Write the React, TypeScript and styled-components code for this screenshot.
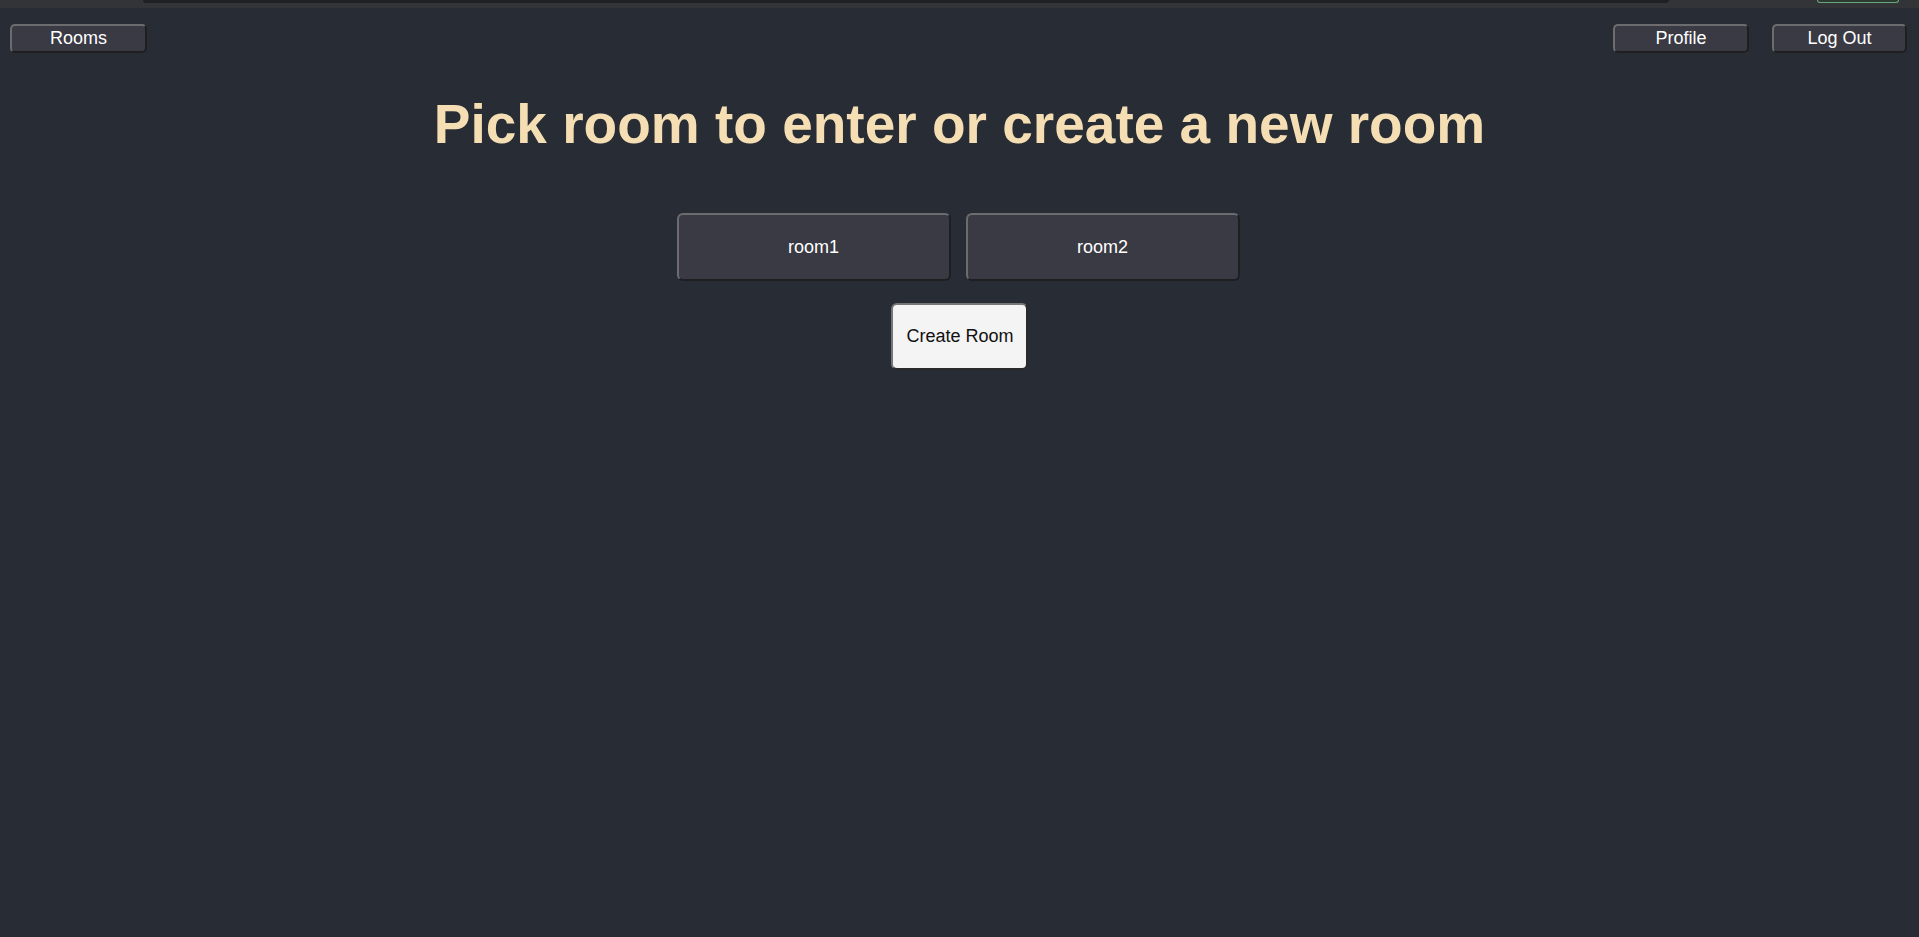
import styled, { createGlobalStyle } from "styled-components";

const ROOMS = ["room1", "room2"];

const GlobalStyle = createGlobalStyle`
  html,
  body {
    margin: 0;
    padding: 0;
    background: #282c34;
  }
  body {
    font-family: "Liberation Sans", Arial, sans-serif;
  }
`;

const App: React.FC = () => {
  return (
    <>
      <GlobalStyle />
      <Page>
        <TopStrip>
          <AddressBar />
          <StatusPill />
        </TopStrip>
        <NavBar>
          <NavButton $width={137}>Rooms</NavButton>
          <NavGroup>
            <NavButton $width={136}>Profile</NavButton>
            <NavButton $width={135}>Log Out</NavButton>
          </NavGroup>
        </NavBar>
        <Heading>Pick room to enter or create a new room</Heading>
        <RoomList>
          {ROOMS.map((room) => (
            <RoomButton key={room}>{room}</RoomButton>
          ))}
        </RoomList>
        <CreateButton>Create Room</CreateButton>
      </Page>
    </>
  );
};
export default App;

const Page = styled.div`
  min-height: 100vh;
  display: flex;
  flex-direction: column;
  background: #282c34;
`;

const TopStrip = styled.div`
  display: flex;
  align-items: flex-start;
  height: 8px;
  background: #333438;
`;
const AddressBar = styled.div`
  margin-left: 143px;
  width: 1526px;
  height: 3px;
  background: #1f2024;
  border-radius: 0 0 6px 6px;
`;
const StatusPill = styled.div`
  margin-left: auto;
  margin-right: 20px;
  width: 80px;
  height: 2px;
  border: 1px solid #6aa77a;
  border-top: none;
  border-radius: 0 0 7px 7px;
  background: #2c3a32;
`;

const NavBar = styled.div`
  display: flex;
  justify-content: space-between;
  align-items: center;
  padding: 16px 12px 0 10px;
`;
const NavGroup = styled.div`
  display: flex;
  gap: 23px;
`;

const DarkButton = styled.button`
  box-sizing: border-box;
  display: flex;
  align-items: center;
  justify-content: center;
  padding: 0;
  font-family: "Liberation Sans", Arial, sans-serif;
  font-size: 18px;
  color: #ffffff;
  background: #3a3a44;
  border: 2px solid;
  border-color: #6c6c6e #1f1f22 #1f1f22 #6c6c6e;
  cursor: pointer;
`;

const NavButton = styled(DarkButton)<{ $width: number }>`
  width: ${(p) => p.$width}px;
  height: 29px;
  border-radius: 5px;
`;

const Heading = styled.h1`
  margin: 39px 0 0;
  text-align: center;
  font-size: 55px;
  font-weight: bold;
  line-height: normal;
  color: #f5deb3;
`;

const RoomList = styled.div`
  display: flex;
  justify-content: center;
  gap: 15px;
  margin-top: 57px;
  padding-right: 3px;
`;
const RoomButton = styled(DarkButton)`
  width: 274px;
  height: 68px;
  border-radius: 6px;
`;

const CreateButton = styled.button`
  box-sizing: border-box;
  align-self: center;
  margin: 22px 0 0;
  height: 67px;
  padding: 0 12px 0 13px;
  font-family: "Liberation Sans", Arial, sans-serif;
  font-size: 18px;
  color: #111111;
  background: #f4f4f4;
  border: 2px solid;
  border-color: #767676 #2a2a2a #2a2a2a #767676;
  border-radius: 6px;
  cursor: pointer;
`;
